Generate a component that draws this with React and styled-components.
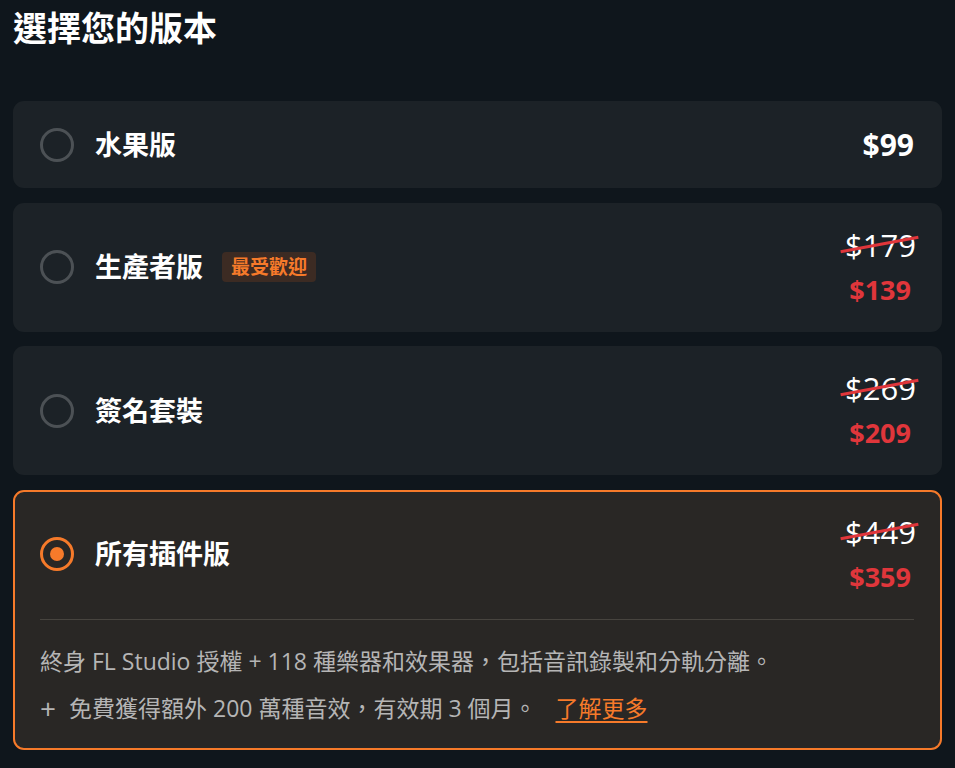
import React, { useState } from "react";
import styled, { createGlobalStyle } from "styled-components";

const COLORS = {
  page: "#0f161c",
  card: "#1c2227",
  cardActive: "#292725",
  orange: "#f67a2a",
  red: "#e0363b",
  ring: "#4c5155",
  text: "#ffffff",
  muted: "#b5b5b5",
  divider: "#47443f",
  badgeBg: "#3c2b23",
};

const GlobalStyle = createGlobalStyle`
  body {
    margin: 0;
    background: ${COLORS.page};
    font-family: "Open Sans", "Noto Sans CJK TC", sans-serif;
    color: ${COLORS.text};
  }
`;

const editions = [
  { id: "fruity", name: "水果版", price: "$99" },
  { id: "producer", name: "生產者版", old: "$179", price: "$139", badge: "最受歡迎" },
  { id: "signature", name: "簽名套裝", old: "$269", price: "$209" },
  { id: "all", name: "所有插件版", old: "$449", price: "$359" },
];

const App = () => {
  const [selected, setSelected] = useState("all");

  return (
    <>
      <GlobalStyle />
      <Page>
        <Title>選擇您的版本</Title>
        <List>
          {editions.map((ed) => {
            const active = ed.id === selected;
            return (
              <Card key={ed.id} $active={active} onClick={() => setSelected(ed.id)}>
                <CardHead>
                  <Radio $active={active} />
                  <Name>{ed.name}</Name>
                  {ed.badge && <Badge>{ed.badge}</Badge>}
                  <PriceBlock>
                    {ed.old ? (
                      <>
                        <OldPrice>{ed.old}</OldPrice>
                        <SalePrice>{ed.price}</SalePrice>
                      </>
                    ) : (
                      <Price>{ed.price}</Price>
                    )}
                  </PriceBlock>
                </CardHead>
                {active && ed.id === "all" && (
                  <Details>
                    <DetailLine>
                      終身 FL Studio 授權 + 118 種樂器和效果器，包括音訊錄製和分軌分離。
                    </DetailLine>
                    <DetailLine>
                      <Plus>+</Plus>免費獲得額外 200 萬種音效，有效期 3 個月。 <MoreLink href="#">了解更多</MoreLink>
                    </DetailLine>
                  </Details>
                )}
              </Card>
            );
          })}
        </List>
      </Page>
    </>
  );
};

export default App;

const Page = styled.div`
  padding: 8px 13px 18px;
`;

const Title = styled.h1`
  margin: 0 0 53px;
  font-size: 34px;
  line-height: 40px;
  font-weight: 700;
  color: ${COLORS.text};
`;

const List = styled.div`
  display: flex;
  flex-direction: column;
  gap: 14.5px;
`;

const Card = styled.div`
  background: ${(p) => (p.$active ? COLORS.cardActive : COLORS.card)};
  border: 2px solid ${(p) => (p.$active ? COLORS.orange : "transparent")};
  border-radius: 11px;
  padding: 20px 26px 20px 25px;
  cursor: pointer;
`;

const CardHead = styled.div`
  display: flex;
  align-items: center;
`;

const Radio = styled.span`
  position: relative;
  box-sizing: border-box;
  width: 34px;
  height: 34px;
  border-radius: 50%;
  border: 3px solid ${(p) => (p.$active ? COLORS.orange : COLORS.ring)};
  flex-shrink: 0;

  &::after {
    content: "";
    display: ${(p) => (p.$active ? "block" : "none")};
    position: absolute;
    left: 50%;
    top: 50%;
    width: 14px;
    height: 14px;
    margin: -7px 0 0 -7px;
    border-radius: 50%;
    background: ${COLORS.orange};
  }
`;

const Name = styled.span`
  margin-left: 21px;
  font-size: 27px;
  font-weight: 700;
  line-height: 40px;
`;

const Badge = styled.span`
  margin-left: 19px;
  padding: 0 9px;
  height: 30px;
  line-height: 30px;
  border-radius: 4px;
  background: ${COLORS.badgeBg};
  color: ${COLORS.orange};
  font-size: 19px;
  font-weight: 700;
`;

const PriceBlock = styled.div`
  margin-left: auto;
  display: flex;
  flex-direction: column;
  align-items: flex-end;
  gap: 5px;
`;

const Price = styled.span`
  font-size: 30px;
  font-weight: 700;
  line-height: 43px;
`;

const OldPrice = styled.span`
  position: relative;
  font-size: 31px;
  font-weight: 400;
  line-height: 40px;
  margin-right: -2px;

  &::after {
    content: "";
    position: absolute;
    left: -5px;
    right: -3px;
    top: 50%;
    height: 3px;
    margin-top: -2px;
    background: ${COLORS.red};
    transform: rotate(-10.5deg);
  }
`;

const SalePrice = styled.span`
  font-size: 27px;
  font-weight: 700;
  line-height: 40px;
  color: ${COLORS.red};
  margin-right: 3px;
`;

const Details = styled.div`
  margin-top: 22px;
  border-top: 1px solid ${COLORS.divider};
  padding: 26px 0 5px;
  display: flex;
  flex-direction: column;
  gap: 17px;
`;

const DetailLine = styled.p`
  margin: 0;
  font-size: 23px;
  line-height: 30px;
  color: ${COLORS.muted};
`;

const Plus = styled.span`
  display: inline-block;
  width: 29px;
  font-size: 28px;
  line-height: 30px;
  vertical-align: top;
`;

const MoreLink = styled.a`
  margin-left: 13px;
  color: ${COLORS.orange};
  text-decoration: underline;
  text-underline-offset: 4px;
`;
